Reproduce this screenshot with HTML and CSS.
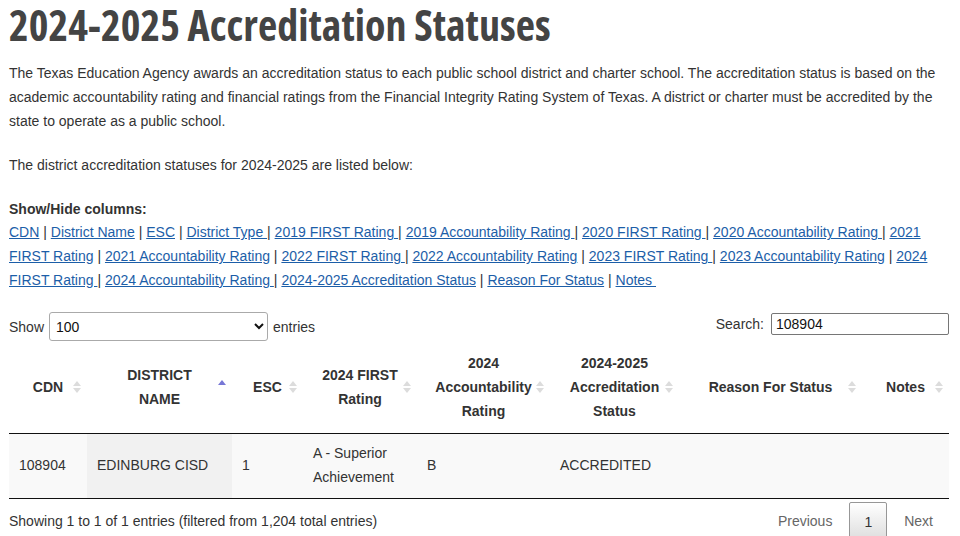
FILE: index.html
```html
<!DOCTYPE html>
<html lang="en">
<head>
<meta charset="utf-8">
<title>2024-2025 Accreditation Statuses</title>
<link rel="stylesheet" href="styles.css">
</head>
<body>
<main class="page">
  <h1 class="title">2024-2025 Accreditation Statuses</h1>
  <p class="text intro">The Texas Education Agency awards an accreditation status to each public school district and charter school. The accreditation status is based on the academic accountability rating and financial ratings from the Financial Integrity Rating System of Texas. A district or charter must be accredited by the state to operate as a public school.</p>
  <p class="text">The district accreditation statuses for 2024-2025 are listed below:</p>
  <p class="text"><strong>Show/Hide columns:</strong><br>
    <a href="#">CDN</a> | <a href="#">District Name</a> | <a href="#">ESC</a> | <a href="#">District Type </a>| <a href="#">2019 FIRST Rating </a>| <a href="#">2019 Accountability Rating </a>| <a href="#">2020 FIRST Rating </a>| <a href="#">2020 Accountability Rating </a>| <a href="#">2021 FIRST Rating</a> | <a href="#">2021 Accountability Rating</a> | <a href="#">2022 FIRST Rating </a>| <a href="#">2022 Accountability Rating</a> | <a href="#">2023 FIRST Rating </a>| <a href="#">2023 Accountability Rating</a> | <a href="#">2024 FIRST Rating </a>| <a href="#">2024 Accountability Rating </a>| <a href="#">2024-2025 Accreditation Status</a> | <a href="#">Reason For Status</a> | <a href="#">Notes&nbsp;</a>
  </p>

  <div class="controls">
    <label class="length">Show
      <select class="length-select">
        <option>10</option>
        <option>25</option>
        <option>50</option>
        <option selected>100</option>
      </select>
      entries</label>
    <label class="filter">Search: <input class="search" type="search" value="108904"></label>
  </div>

  <table class="data">
    <colgroup>
      <col class="c1"><col class="c2"><col class="c3"><col class="c4"><col class="c5"><col class="c6"><col class="c7"><col class="c8">
    </colgroup>
    <thead>
      <tr>
        <th class="sort">CDN</th>
        <th class="sort asc">DISTRICT NAME</th>
        <th class="sort">ESC</th>
        <th class="sort">2024 FIRST Rating</th>
        <th class="sort">2024 Accountability Rating</th>
        <th class="sort">2024-2025 Accreditation Status</th>
        <th class="sort">Reason For Status</th>
        <th class="sort">Notes</th>
      </tr>
    </thead>
    <tbody>
      <tr>
        <td>108904</td>
        <td class="sorted">EDINBURG CISD</td>
        <td>1</td>
        <td>A - Superior Achievement</td>
        <td>B</td>
        <td>ACCREDITED</td>
        <td></td>
        <td></td>
      </tr>
    </tbody>
  </table>

  <div class="footer">
    <div class="info">Showing 1 to 1 of 1 entries (filtered from 1,204 total entries)</div>
    <div class="paging">
      <span class="pbtn disabled">Previous</span>
      <span class="pbtn current">1</span>
      <span class="pbtn disabled">Next</span>
    </div>
  </div>
</main>
</body>
</html>
```
FILE: styles.css
```css
html, body {
  margin: 0;
  padding: 0;
  background: #fff;
}

body {
  font-family: "Liberation Sans", Arial, sans-serif;
  font-size: 14px;
  color: #333;
}

.page {
  margin: 0 11px 0 9px;
}

.title {
  margin: 0 0 14px;
  padding-top: 1px;
  font-family: "Open Sans", sans-serif;
  font-stretch: 75%;
  font-weight: 700;
  font-size: 42px;
  line-height: 47px;
  color: #444;
  letter-spacing: 0.05px;
}

.text {
  margin: 0 0 1.4em;
  line-height: 1.7;
}

.text.intro {
  margin-bottom: 20.8px;
}

.text strong {
  font-weight: 700;
}

.text a {
  color: #1c5ea8;
  text-decoration: underline;
}

.controls {
  display: flex;
  justify-content: space-between;
  align-items: center;
  padding-top: 0;
  height: 29px;
}

.length {
  display: flex;
  align-items: center;
  gap: 5px;
}

.length-select {
  width: 219px;
  height: 29px;
  border: 1px solid #aaa;
  border-radius: 3px;
  background: #fff;
  font-family: "Liberation Sans", Arial, sans-serif;
  font-size: 14px;
  color: #111;
  padding: 0 2px;
}

.filter {
  display: flex;
  align-items: center;
  gap: 7px;
  margin-top: -5px;
}

.search {
  width: 178px;
  height: 22px;
  box-sizing: border-box;
  border: 1px solid #767676;
  border-radius: 2px;
  padding: 1px 4px;
  font-family: "Liberation Sans", Arial, sans-serif;
  font-size: 14px;
  color: #111;
}

.data {
  width: 940px;
  border-collapse: separate;
  border-spacing: 0;
  table-layout: fixed;
}

.c1 { width: 78px; }
.c2 { width: 145px; }
.c3 { width: 71px; }
.c4 { width: 114px; }
.c5 { width: 133px; }
.c6 { width: 129px; }
.c7 { width: 183px; }
.c8 { width: 87px; }

.data th {
  position: relative;
  padding: 10px 18px;
  font-weight: 700;
  line-height: 24px;
  text-align: center;
  vertical-align: middle;
  border-bottom: 1px solid #111;
  color: #333;
}

.data th.sort::before,
.data th.sort::after {
  content: "";
  position: absolute;
  right: 6px;
  width: 0;
  height: 0;
  border-left: 4px solid transparent;
  border-right: 4px solid transparent;
}

.data th.sort::before {
  top: calc(50% - 6px);
  border-bottom: 5px solid #dcdcdc;
}

.data th.sort::after {
  top: calc(50% + 1px);
  border-top: 5px solid #dcdcdc;
}

.data th.asc::before {
  top: calc(50% - 7px);
  border-bottom-color: #7777d6;
}

.data th.asc::after {
  display: none;
}

.data td {
  padding: 7px 10px 9px;
  line-height: 24px;
  background: #f9f9f9;
  border-bottom: 1px solid #111;
  vertical-align: middle;
}

.data td.sorted {
  background: #f1f1f1;
}

.footer {
  display: flex;
  justify-content: space-between;
  align-items: flex-start;
}

.info {
  padding-top: 10px;
  line-height: 24px;
}

.paging {
  display: flex;
  padding-top: 3px;
  margin-right: 1px;
}

.pbtn {
  display: block;
  padding: 7px 14px 7px;
  margin-left: 2px;
  line-height: 24px;
  border: 1px solid transparent;
  border-radius: 2px;
  color: #666;
}

.pbtn.disabled {
  padding-top: 6px;
}

.pbtn.current {
  color: #333;
  border-color: #979797;
  background: linear-gradient(to bottom, #fff 0%, #dcdcdc 100%);
}
```
